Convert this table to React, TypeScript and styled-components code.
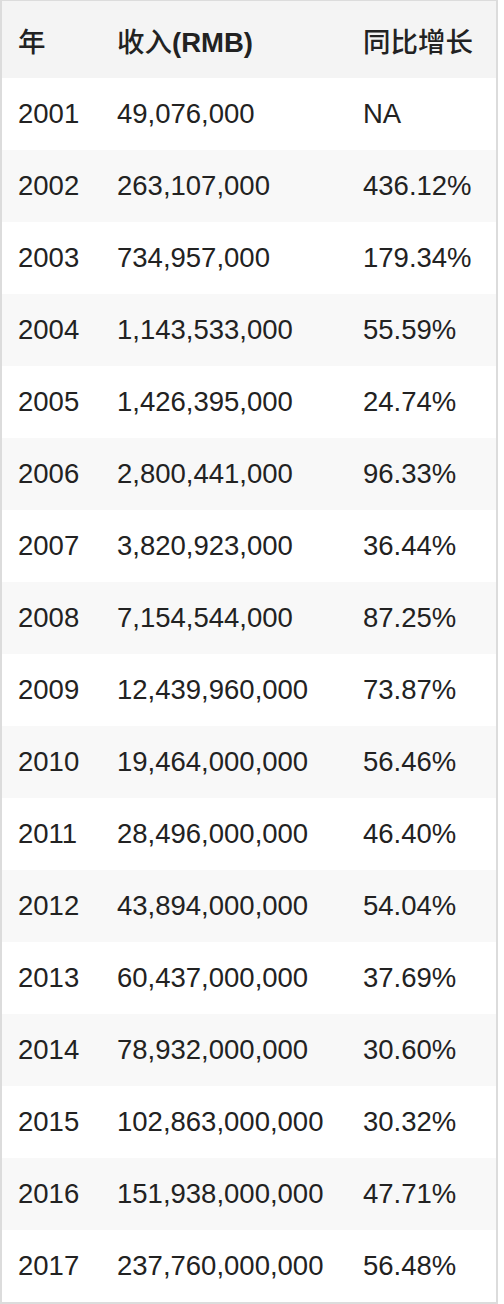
import React from 'react'
import styled, { createGlobalStyle } from 'styled-components'

const rows: [string, string, string][] = [
  ['2001', '49,076,000', 'NA'],
  ['2002', '263,107,000', '436.12%'],
  ['2003', '734,957,000', '179.34%'],
  ['2004', '1,143,533,000', '55.59%'],
  ['2005', '1,426,395,000', '24.74%'],
  ['2006', '2,800,441,000', '96.33%'],
  ['2007', '3,820,923,000', '36.44%'],
  ['2008', '7,154,544,000', '87.25%'],
  ['2009', '12,439,960,000', '73.87%'],
  ['2010', '19,464,000,000', '56.46%'],
  ['2011', '28,496,000,000', '46.40%'],
  ['2012', '43,894,000,000', '54.04%'],
  ['2013', '60,437,000,000', '37.69%'],
  ['2014', '78,932,000,000', '30.60%'],
  ['2015', '102,863,000,000', '30.32%'],
  ['2016', '151,938,000,000', '47.71%'],
  ['2017', '237,760,000,000', '56.48%'],
]

const GlobalStyle = createGlobalStyle`
  html, body {
    margin: 0;
    padding: 0;
    background: #fff;
  }
  body {
    font-family: "Liberation Sans", "Noto Sans CJK SC", sans-serif;
    color: #222;
  }
`

const App: React.FC = () => {
  return (
    <>
      <GlobalStyle />
      <Table>
        <colgroup>
          <col style={{ width: 99 }} />
          <col style={{ width: 246 }} />
          <col />
        </colgroup>
        <thead>
          <HeadRow>
            <Th>
              <Cjk>年</Cjk>
            </Th>
            <Th>
              <Cjk>收入</Cjk>(RMB)
            </Th>
            <Th>
              <Cjk>同比增长</Cjk>
            </Th>
          </HeadRow>
        </thead>
        <tbody>
          {rows.map(([year, income, growth], i) => (
            <Row key={year} $striped={i % 2 === 1}>
              <Td>{year}</Td>
              <Td>{income}</Td>
              <Td>{growth}</Td>
            </Row>
          ))}
        </tbody>
      </Table>
    </>
  )
}

export default App

const Table = styled.table`
  width: 498px;
  table-layout: fixed;
  border-collapse: separate;
  border-spacing: 0;
  border: 2px solid #dcdcdc;
  border-top-width: 1px;
  font-size: 27.5px;
`

const HeadRow = styled.tr`
  background: #f4f4f4;
`

const Row = styled.tr<{ $striped: boolean }>`
  background: ${(p) => (p.$striped ? '#f8f8f8' : '#ffffff')};
`

const Th = styled.th`
  height: 77px;
  padding: 0 0 0 16px;
  text-align: left;
  font-weight: 700;
  white-space: nowrap;
  vertical-align: middle;
`

const Cjk = styled.span`
  font-family: "Noto Sans CJK SC", sans-serif;
  font-weight: 500;
`

const Td = styled.td`
  height: 72px;
  padding: 0 0 0 16px;
  white-space: nowrap;
  vertical-align: middle;
`
